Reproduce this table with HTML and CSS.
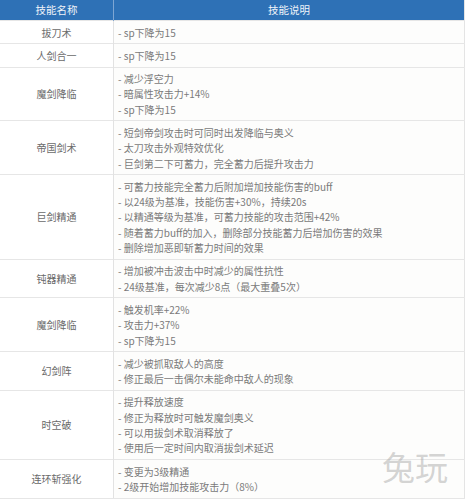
FILE: index.html
```html
<!DOCTYPE html>
<html lang="zh-CN">
<head>
<meta charset="utf-8">
<link rel="stylesheet" href="styles.css">
</head>
<body>
<div class="wrap">
<table class="skills">
  <thead>
    <tr><th class="name">技能名称</th><th class="desc">技能说明</th></tr>
  </thead>
  <tbody>
    <tr><td class="name">拔刀术</td><td class="desc">- sp下降为15</td></tr>
    <tr><td class="name">人剑合一</td><td class="desc">- sp下降为15</td></tr>
    <tr><td class="name">魔剑降临</td><td class="desc">- 减少浮空力<br>- 暗属性攻击力+14%<br>- sp下降为15</td></tr>
    <tr><td class="name">帝国剑术</td><td class="desc">- 短剑帝剑攻击时可同时出发降临与奥义<br>- 太刀攻击外观特效优化<br>- 巨剑第二下可蓄力，完全蓄力后提升攻击力</td></tr>
    <tr><td class="name">巨剑精通</td><td class="desc">- 可蓄力技能完全蓄力后附加增加技能伤害的buff<br>- 以24级为基准，技能伤害+30%，持续20s<br>- 以精通等级为基准，可蓄力技能的攻击范围+42%<br>- 随着蓄力buff的加入，删除部分技能蓄力后增加伤害的效果<br>- 删除增加恶即斩蓄力时间的效果</td></tr>
    <tr><td class="name">钝器精通</td><td class="desc">- 增加被冲击波击中时减少的属性抗性<br>- 24级基准，每次减少8点（最大重叠5次）</td></tr>
    <tr><td class="name">魔剑降临</td><td class="desc">- 触发机率+22%<br>- 攻击力+37%<br>- sp下降为15</td></tr>
    <tr><td class="name">幻剑阵</td><td class="desc">- 减少被抓取敌人的高度<br>- 修正最后一击偶尔未能命中敌人的现象</td></tr>
    <tr><td class="name">时空破</td><td class="desc">- 提升释放速度<br>- 修正为释放时可触发魔剑奥义<br>- 可以用拔剑术取消释放了<br>- 使用后一定时间内取消拔剑术延迟</td></tr>
    <tr><td class="name">连环斩强化</td><td class="desc">- 变更为3级精通<br>- 2级开始增加技能攻击力（8%）</td></tr>
  </tbody>
</table>
<div class="watermark">兔玩</div>
</div>
</body>
</html>
```

FILE: styles.css
```css
html, body {
  margin: 0;
  padding: 0;
  background: #ffffff;
}
.wrap {
  position: relative;
  width: 467px;
  height: 500px;
  overflow: hidden;
}
.skills {
  width: 465px;
  border-collapse: collapse;
  table-layout: fixed;
  font-family: "Noto Sans CJK SC", "Noto Sans", sans-serif;
  font-size: 10px;
  color: #7a7a7a;
  border-right: 1px solid #e4e4e4;
}
.skills th {
  background: #2e71b6;
  color: #eef3f9;
  font-weight: normal;
  height: 20px;
  padding: 0;
  line-height: 20px;
  text-align: center;
  font-size: 10.5px;
}
.skills th.name {
  width: 113px;
  border-right: 1px solid #7ea6d3;
}
.skills td {
  border-top: 1px solid #e6e6e6;
  padding: 3.5px 0 3.5px 0;
  line-height: 15.3px;
  vertical-align: middle;
}
.skills td.name {
  text-align: center;
  color: #6a6a6a;
  background: #ffffff;
  border-right: 1px solid #e2e2e2;
}
.skills td.desc {
  padding-left: 4px;
  background: #fdfdfc;
  text-align: left;
}
.skills tbody tr:last-child td {
  border-bottom: 1px solid #e6e6e6;
}
.watermark {
  position: absolute;
  left: 382px;
  top: 448px;
  font-family: "Noto Sans CJK SC", sans-serif;
  font-size: 33px;
  line-height: 36px;
  color: rgba(160, 160, 160, 0.45);
}
```
